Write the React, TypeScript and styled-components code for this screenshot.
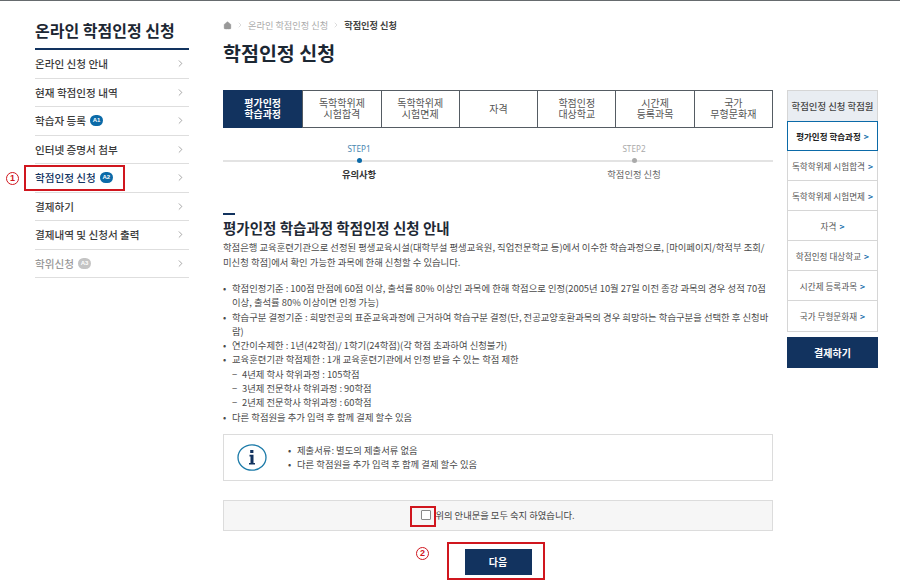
import styled, { createGlobalStyle } from "styled-components";
import { ChevronRight, House } from "lucide-react";

const navy = "#12335f";
const blue = "#0b6aa8";

const Global = createGlobalStyle`
  html, body {
    margin: 0;
    padding: 0;
    background: #fff;
  }
  body {
    font-family: "Noto Sans CJK KR", "Noto Sans", sans-serif;
    color: #444;
  }
  * { box-sizing: border-box; }
`;

const Page = styled.div`
  width: 900px;
  height: 583px;
  overflow: hidden;
  border-top: 1px solid #666b6e;
  padding-left: 35px;
  display: grid;
  grid-template-columns: 154px 550px 91px;
  column-gap: 34px;
  position: relative;
`;

const Side = styled.aside`
  padding-top: 17px;
`;

const SideTitle = styled.h2`
  margin: 0;
  height: 32px;
  font-size: 16px;
  line-height: 24px;
  font-weight: 700;
  color: #1c2733;
  border-bottom: 2px solid ${navy};
  white-space: nowrap;
`;

const SideRow = styled.div<{ $active?: boolean; $muted?: boolean }>`
  height: 28.5px;
  border-bottom: 1px solid #dedede;
  display: flex;
  align-items: center;
  gap: 4px;
  font-size: 10.6px;
  font-weight: 500;
  color: ${(p) => (p.$active ? navy : p.$muted ? "#999" : "#3a3a3a")};
  & > svg {
    margin-left: auto;
    margin-right: 3px;
    color: #777;
  }
`;

const Badge = styled.span<{ $muted?: boolean }>`
  width: 13px;
  height: 11px;
  border-radius: 6px;
  background: ${(p) => (p.$muted ? "#c4c4c4" : blue)};
  color: #fff;
  font-size: 6px;
  font-weight: 700;
  line-height: 11px;
  text-align: center;
  font-family: "Liberation Sans", sans-serif;
`;

const Main = styled.main`
  padding-top: 17px;
`;

const Crumbs = styled.div`
  height: 14px;
  display: flex;
  align-items: center;
  gap: 4px;
  font-size: 9.2px;
  color: #aaa;
  & strong {
    color: #444;
    font-weight: 700;
  }
  & svg {
    color: #999;
  }
`;

const PageTitle = styled.h1`
  margin: 6px 0 0;
  height: 30px;
  font-size: 19.5px;
  line-height: 30px;
  font-weight: 700;
  color: #1c2733;
`;

const Tabs = styled.div`
  margin-top: 22px;
  height: 38px;
  display: grid;
  grid-template-columns: repeat(7, 1fr);
  border: 1px solid #555c63;
`;

const Tab = styled.div<{ $active?: boolean }>`
  display: flex;
  align-items: center;
  justify-content: center;
  text-align: center;
  font-size: 10px;
  line-height: 10.7px;
  font-weight: ${(p) => (p.$active ? 700 : 400)};
  color: ${(p) => (p.$active ? "#fff" : "#555")};
  background: ${(p) => (p.$active ? navy : "#fff")};
  border-left: ${(p) => (p.$active ? "none" : "1px solid #555c63")};
  &:first-child { border-left: none; margin: -1px 0 -1px -1px; }
`;

const Steps = styled.div`
  margin-top: 14px;
  display: grid;
  grid-template-columns: 1fr 1fr;
`;

const Step = styled.div<{ $on?: boolean }>`
  text-align: center;
  & > small {
    display: block;
    height: 14px;
    font-size: 8.2px;
    line-height: 14px;
    font-family: "Noto Sans", sans-serif;
    padding-right: 3px;
    color: ${(p) => (p.$on ? "#4a86b0" : "#aaa")};
  }
  & > i {
    display: block;
    height: 9px;
    position: relative;
    background: linear-gradient(#e3e3e3, #e3e3e3) center / 100% 2px no-repeat;
  }
  & > i::after {
    content: "";
    position: absolute;
    left: 50%;
    top: 2px;
    margin-left: -3.5px;
    width: 5px;
    height: 5px;
    border-radius: 50%;
    background: ${(p) => (p.$on ? blue : "#aaa")};
  }
  & > b {
    display: block;
    margin-top: 2px;
    padding-right: 3px;
    font-size: 9.3px;
    line-height: 14px;
    font-weight: ${(p) => (p.$on ? 700 : 400)};
    color: ${(p) => (p.$on ? "#333" : "#666")};
  }
`;

const GuideMark = styled.div`
  margin-top: 32px;
  width: 12px;
  height: 2px;
  background: ${navy};
`;

const GuideTitle = styled.h3`
  margin: 3px 0 0;
  height: 20px;
  font-size: 14.5px;
  line-height: 20px;
  font-weight: 700;
  color: #1f2a36;
`;

const Para = styled.p`
  margin: 2px 0 0;
  font-size: 9.35px;
  line-height: 15px;
  color: #4a4a4a;
  white-space: nowrap;
`;

const List = styled.ul`
  list-style: none;
  margin: 11px 0 0;
  padding: 0;
`;

const Item = styled.li<{ $sub?: boolean }>`
  position: relative;
  padding-left: ${(p) => (p.$sub ? "19px" : "9px")};
  font-size: 9.35px;
  line-height: 14.3px;
  color: #4a4a4a;
  white-space: nowrap;
  &::before {
    content: "${(p) => (p.$sub ? "−" : "•")}";
    position: absolute;
    left: ${(p) => (p.$sub ? "9px" : "0")};
  }
`;

const InfoBox = styled.div`
  margin-top: 10px;
  height: 47px;
  border: 1px solid #dcdcdc;
  display: flex;
  align-items: center;
  padding-left: 13px;
  gap: 21px;
`;

const InfoList = styled.ul`
  list-style: none;
  margin: 0;
  padding: 0;
  flex: 1;
`;

const AgreeBox = styled.div`
  margin-top: 19px;
  height: 31px;
  background: #f6f6f6;
  border: 1px solid #dcdcdc;
  display: flex;
  align-items: center;
  justify-content: center;
  gap: 4px;
  font-size: 9.3px;
  color: #444;
`;

const Check = styled.span`
  width: 10px;
  height: 10px;
  border: 1px solid #888;
  background: #fff;
  border-radius: 1px;
`;

const NextRow = styled.div`
  margin-top: 18px;
  display: flex;
  justify-content: center;
`;

const NextBtn = styled.div`
  width: 67px;
  height: 26px;
  background: ${navy};
  color: #fff;
  font-size: 10px;
  font-weight: 700;
  display: flex;
  align-items: center;
  justify-content: center;
`;

const Right = styled.aside`
  margin-left: -20px;
  width: 91px;
  padding-top: 89px;
`;

const RightHead = styled.div`
  height: 31px;
  background: #e9edf2;
  border: 1px solid #d6d6d6;
  border-bottom: none;
  font-size: 9.4px;
  font-weight: 500;
  display: flex;
  align-items: center;
  justify-content: center;
  color: #444;
  white-space: nowrap;
`;

const RightList = styled.div`
  border: 1px solid #d6d6d6;
  border-top: none;
`;

const RightRow = styled.div<{ $active?: boolean }>`
  height: 30px;
  margin: ${(p) => (p.$active ? "0 -1px" : "0")};
  border: ${(p) => (p.$active ? `1px solid ${blue}` : "none")};
  border-bottom: ${(p) => (p.$active ? `1px solid ${blue}` : "1px solid #d6d6d6")};
  display: flex;
  align-items: center;
  justify-content: center;
  font-size: ${(p) => (p.$active ? "8.5px" : "8.6px")};
  font-weight: ${(p) => (p.$active ? 700 : 400)};
  color: ${(p) => (p.$active ? "#222" : "#555")};
  white-space: nowrap;
  &:last-child { border-bottom: none; }
  & > b {
    color: ${blue};
    margin-left: 3px;
    font-weight: 700;
  }
`;

const PayBtn = styled.div`
  margin-top: 5px;
  height: 31px;
  background: ${navy};
  color: #fff;
  font-size: 10px;
  font-weight: 700;
  display: flex;
  align-items: center;
  justify-content: center;
`;

const RedBox = styled.div<{ $x: number; $y: number; $w: number; $h: number }>`
  position: absolute;
  left: ${(p) => p.$x}px;
  top: ${(p) => p.$y}px;
  width: ${(p) => p.$w}px;
  height: ${(p) => p.$h}px;
  border: 2px solid #d0161e;
`;

const Num = styled.span<{ $x: number; $y: number }>`
  position: absolute;
  left: ${(p) => p.$x}px;
  top: ${(p) => p.$y}px;
  width: 13px;
  height: 13px;
  border: 1.5px solid #d0161e;
  border-radius: 50%;
  color: #d0161e;
  font-size: 9px;
  line-height: 10px;
  font-weight: 700;
  text-align: center;
  font-family: "Liberation Sans", sans-serif;
`;

const sideItems: { label: string; badge?: string; active?: boolean; muted?: boolean }[] = [
  { label: "온라인 신청 안내" },
  { label: "현재 학점인정 내역" },
  { label: "학습자 등록", badge: "A1" },
  { label: "인터넷 증명서 첨부" },
  { label: "학점인정 신청", badge: "A2", active: true },
  { label: "결제하기" },
  { label: "결제내역 및 신청서 출력" },
  { label: "학위신청", badge: "A3", muted: true },
];

const tabs = [
  ["평가인정", "학습과정"],
  ["독학학위제", "시험합격"],
  ["독학학위제", "시험면제"],
  ["자격"],
  ["학점인정", "대상학교"],
  ["시간제", "등록과목"],
  ["국가", "무형문화재"],
];

const rightItems = [
  "평가인정 학습과정",
  "독학학위제 시험합격",
  "독학학위제 시험면제",
  "자격",
  "학점인정 대상학교",
  "시간제 등록과목",
  "국가 무형문화재",
];

export default function App() {
  return (
    <Page>
      <Global />
      <Side>
        <SideTitle>온라인 학점인정 신청</SideTitle>
        {sideItems.map((s) => (
          <SideRow key={s.label} $active={s.active} $muted={s.muted}>
            {s.label}
            {s.badge && <Badge $muted={s.muted}>{s.badge}</Badge>}
            <ChevronRight size={11} strokeWidth={1.4} />
          </SideRow>
        ))}
      </Side>
      <Main>
        <Crumbs>
          <House size={9} fill="#999" strokeWidth={1} />
          <ChevronRight size={8} strokeWidth={1} />
          온라인 학점인정 신청
          <ChevronRight size={8} strokeWidth={1} />
          <strong>학점인정 신청</strong>
        </Crumbs>
        <PageTitle>학점인정 신청</PageTitle>
        <Tabs>
          {tabs.map((t, i) => (
            <Tab key={t.join()} $active={i === 0}>
              <span>
                {t[0]}
                {t[1] && <br />}
                {t[1]}
              </span>
            </Tab>
          ))}
        </Tabs>
        <Steps>
          <Step $on>
            <small>STEP1</small>
            <i />
            <b>유의사항</b>
          </Step>
          <Step>
            <small>STEP2</small>
            <i />
            <b>학점인정 신청</b>
          </Step>
        </Steps>
        <GuideMark />
        <GuideTitle>평가인정 학습과정 학점인정 신청 안내</GuideTitle>
        <Para>
          학점은행 교육훈련기관으로 선정된 평생교육시설(대학부설 평생교육원, 직업전문학교 등)에서 이수한 학습과정으로, [마이페이지/학적부 조회/
          <br />
          미신청 학점]에서 확인 가능한 과목에 한해 신청할 수 있습니다.
        </Para>
        <List>
          <Item>
            학점인정기준 : 100점 만점에 60점 이상, 출석률 80% 이상인 과목에 한해 학점으로 인정(2005년 10월 27일 이전 종강 과목의 경우 성적 70점
            <br />
            이상, 출석률 80% 이상이면 인정 가능)
          </Item>
          <Item>
            학습구분 결정기준 : 희망전공의 표준교육과정에 근거하여 학습구분 결정(단, 전공교양호환과목의 경우 희망하는 학습구분을 선택한 후 신청바
            <br />
            람)
          </Item>
          <Item>연간이수제한 : 1년(42학점)/ 1학기(24학점)(각 학점 초과하여 신청불가)</Item>
          <Item>교육훈련기관 학점제한 : 1개 교육훈련기관에서 인정 받을 수 있는 학점 제한</Item>
          <Item $sub>4년제 학사 학위과정 : 105학점</Item>
          <Item $sub>3년제 전문학사 학위과정 : 90학점</Item>
          <Item $sub>2년제 전문학사 학위과정 : 60학점</Item>
          <Item>다른 학점원을 추가 입력 후 함께 결제 할수 있음</Item>
        </List>
        <InfoBox>
          <svg width="30" height="27" viewBox="0 0 30 27" aria-hidden="true">
            <ellipse cx="15" cy="13.5" rx="14" ry="12.7" fill="none" stroke="#1b7aa8" strokeWidth="1.3" />
            <rect x="13.2" y="6" width="3.2" height="3" fill="#12335f" />
            <path d="M12.5 10.8h4v8.2h1.5v1.6h-6V19h1.5v-6.6h-1z" fill="#12335f" />
          </svg>
          <InfoList>
            <Item>제출서류: 별도의 제출서류 없음</Item>
            <Item>다른 학점원을 추가 입력 후 함께 결제 할수 있음</Item>
          </InfoList>
        </InfoBox>
        <AgreeBox>
          <Check />
          위의 안내문을 모두 숙지 하였습니다.
        </AgreeBox>
        <NextRow>
          <NextBtn>다음</NextBtn>
        </NextRow>
      </Main>
      <Right>
        <RightHead>학점인정 신청 학점원</RightHead>
        <RightList>
          {rightItems.map((r, i) => (
            <RightRow key={r} $active={i === 0}>
              {r}
              <b>&gt;</b>
            </RightRow>
          ))}
        </RightList>
        <PayBtn>결제하기</PayBtn>
      </Right>
      <RedBox $x={24} $y={164} $w={101} $h={26} />
      <RedBox $x={410} $y={505} $w={26} $h={21} />
      <RedBox $x={447} $y={541} $w={98} $h={38} />
      <Num $x={6} $y={171}>1</Num>
      <Num $x={416} $y={546}>2</Num>
    </Page>
  );
}
